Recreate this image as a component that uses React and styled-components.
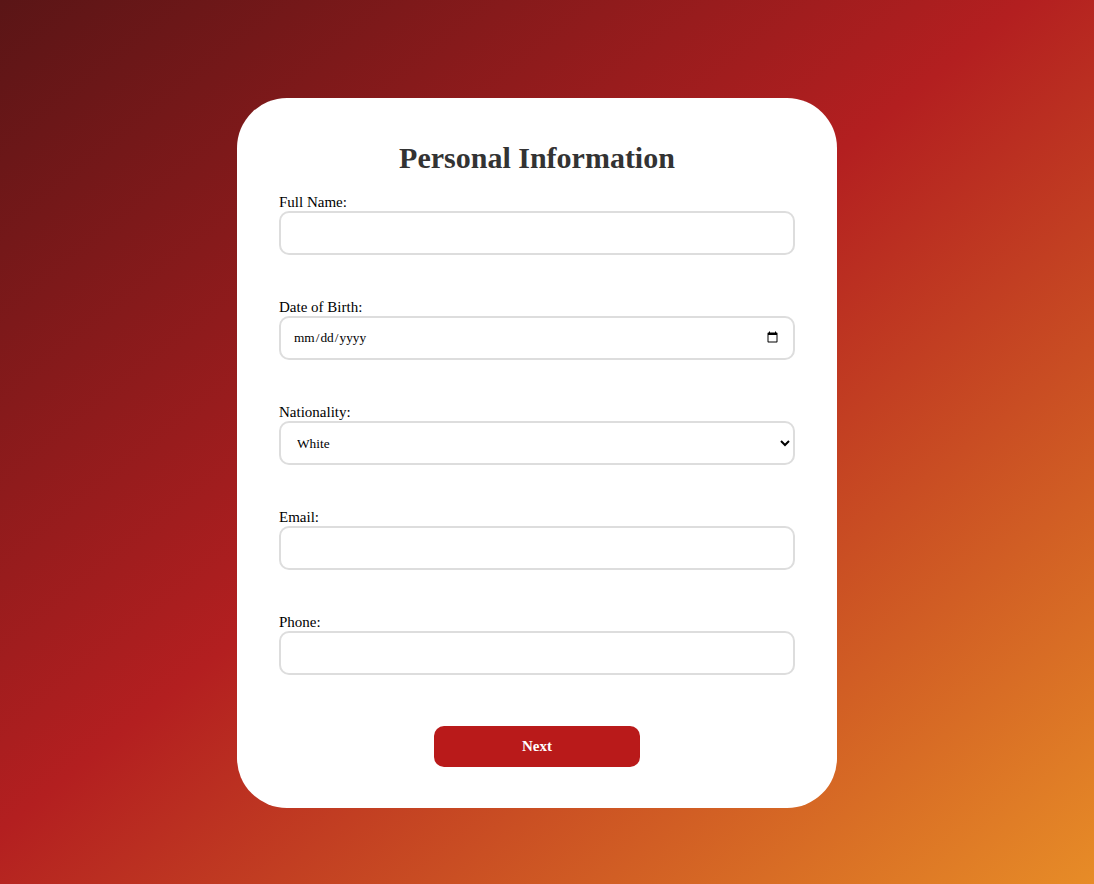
import React from "react";
import styled, { createGlobalStyle } from "styled-components";

const Global = createGlobalStyle`
  html, body { margin: 0; padding: 0; }
  body {
    font-family: "Liberation Serif", "Times New Roman", serif;
    background: linear-gradient(to bottom right, #5a1516 0%, #b31f20 47%, #e78c27 100%);
    min-height: 100vh;
  }
  * { box-sizing: border-box; }
`;

const Page = styled.div`
  min-height: 884px;
  display: flex;
  justify-content: center;
  align-items: flex-start;
  padding: 98px 20px 0 0;
`;

const Card = styled.form`
  width: 600px;
  background: #ffffff;
  border-radius: 50px;
  padding: 42px 42px 41px;
  display: flex;
  flex-direction: column;
`;

const Title = styled.h1`
  margin: 0 0 17px;
  font-size: 30px;
  line-height: 36px;
  font-weight: bold;
  color: #333333;
  text-align: center;
`;

const Group = styled.div`
  display: flex;
  flex-direction: column;
  margin-bottom: ${(p) => (p.$last ? "51px" : "43px")};
`;

const Label = styled.label`
  display: block;
  font-size: 15px;
  line-height: 18px;
  color: #000;
`;

const fieldCss = `
  width: 100%;
  height: 44px;
  border: 2px solid #dddddd;
  border-radius: 10px;
  background: #ffffff;
  font-family: "Liberation Serif", "Times New Roman", serif;
  font-size: 13.33px;
  color: #000;
  outline: none;
  margin: 0;
`;

const Input = styled.input`
  ${fieldCss}
  padding: 0 12px;
`;

const Select = styled.select`
  ${fieldCss}
  padding: 0 8px 0 12px;
`;

const Button = styled.button`
  align-self: center;
  width: 206px;
  height: 41px;
  border: none;
  border-radius: 10px;
  background: #b91a1a;
  color: #ffffff;
  font-family: "Liberation Serif", "Times New Roman", serif;
  font-size: 15px;
  font-weight: bold;
  cursor: pointer;
`;

export default function App() {
  return (
    <>
      <Global />
      <Page>
        <Card onSubmit={(e) => e.preventDefault()}>
          <Title>Personal Information</Title>
          <Group>
            <Label htmlFor="name">Full Name:</Label>
            <Input id="name" type="text" />
          </Group>
          <Group>
            <Label htmlFor="dob">Date of Birth:</Label>
            <Input id="dob" type="date" />
          </Group>
          <Group>
            <Label htmlFor="nat">Nationality:</Label>
            <Select id="nat" defaultValue="White">
              <option>White</option>
              <option>Black</option>
              <option>Asian</option>
              <option>Other</option>
            </Select>
          </Group>
          <Group>
            <Label htmlFor="email">Email:</Label>
            <Input id="email" type="email" />
          </Group>
          <Group $last>
            <Label htmlFor="phone">Phone:</Label>
            <Input id="phone" type="tel" />
          </Group>
          <Button type="submit">Next</Button>
        </Card>
      </Page>
    </>
  );
}
